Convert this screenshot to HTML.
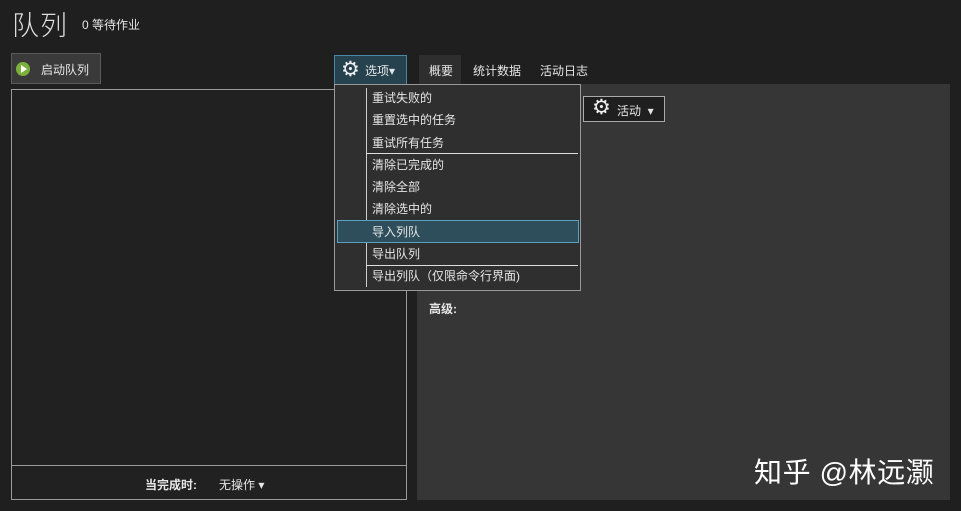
<!DOCTYPE html>
<html><head><meta charset="utf-8"><style>
body{margin:0;width:961px;height:511px;background:#1f1f1f;font-family:"Liberation Sans","Noto Sans CJK SC",sans-serif;color:#e6e6e6;position:relative;overflow:hidden;font-size:12px}
.a{position:absolute}
</style></head><body>
<div class="a" style="left:12px;top:4px;font-size:27px;font-weight:300;color:#ddd;letter-spacing:1px">队列</div>
<div class="a" style="left:82px;top:16px;font-size:12px">0 等待作业</div>
<div class="a" style="left:11px;top:53px;width:88px;height:29px;background:#3a3a3a;border:1px solid #5a5a5a"></div>
<div class="a" style="left:16px;top:62px;width:14px;height:14px;border-radius:50%;background:#7bb03a"></div>
<div class="a" style="left:21px;top:65px;width:0;height:0;border-left:6px solid #fff;border-top:4px solid transparent;border-bottom:4px solid transparent"></div>
<div class="a" style="left:41px;top:61px">启动队列</div>
<div class="a" style="left:11px;top:89px;width:394px;height:409px;border:1px solid #9a9a9a;background:#212121"></div>
<div class="a" style="left:12px;top:465px;width:394px;height:1px;background:#9a9a9a"></div>
<div class="a" style="left:145px;top:476px;font-weight:bold">当完成时:</div>
<div class="a" style="left:219px;top:476px">无操作 ▾</div>
<div class="a" style="left:334px;top:55px;width:71px;height:28px;background:#27424f;border:1px solid #4a88a8"></div>
<div class="a" style="left:341px;top:57px;font-size:21px;color:#eee">⚙</div>
<div class="a" style="left:365px;top:62px">选项▾</div>
<div class="a" style="left:419px;top:55px;width:42px;height:29px;background:#2e2e2e"></div>
<div class="a" style="left:429px;top:62px">概要</div>
<div class="a" style="left:473px;top:62px">统计数据</div>
<div class="a" style="left:540px;top:62px">活动日志</div>
<div class="a" style="left:417px;top:84px;width:533px;height:416px;background:#363636"></div>
<div class="a" style="left:583px;top:96px;width:80px;height:24px;border:1px solid #aaa;background:#1f1f1f"></div>
<div class="a" style="left:592px;top:95px;font-size:21px;color:#eee">⚙</div>
<div class="a" style="left:617px;top:102px">活动 &nbsp;▾</div>
<div class="a" style="left:429px;top:300px;font-weight:bold">高级:</div>
<div class="a" style="left:754px;top:451px;font-size:28px;color:#fff;letter-spacing:0.6px">知乎 @林远灏</div>
<div class="a" style="left:334px;top:84px;width:245px;height:205px;background:#2f2f2f;border:1px solid #999"></div>
<div class="a" style="left:366px;top:88px;width:1px;height:199px;background:#ccc"></div>
<div class="a" style="left:366px;top:153px;width:212px;height:1px;background:#ddd"></div>
<div class="a" style="left:366px;top:265px;width:212px;height:1px;background:#ddd"></div>
<div class="a" style="left:337px;top:220px;width:240px;height:21px;background:#2e4e5c;border:1px solid #5ba0c0"></div>
<div class="a" style="left:372px;top:87px;line-height:22.25px">重试失败的<br>重置选中的任务<br>重试所有任务<br>清除已完成的<br>清除全部<br>清除选中的<br>导入列队<br>导出队列<br>导出列队（仅限命令行界面)</div>
</body></html>
